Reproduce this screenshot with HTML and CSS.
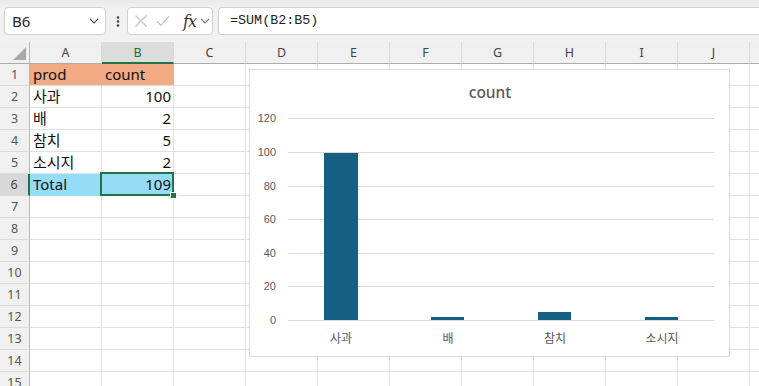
FILE: index.html
```html
<!DOCTYPE html>
<html lang="ko">
<head>
<meta charset="utf-8">
<title>Sheet</title>
<link rel="stylesheet" href="styles.css">
</head>
<body>
<div class="page">
  <div class="toolbar">
    <div class="namebox">
      <span class="nb-text">B6</span>
      <svg class="chev" width="10" height="6" viewBox="0 0 10 6"><path d="M1 1 L5 5 L9 1" fill="none" stroke="#555" stroke-width="1.2"/></svg>
    </div>
    <svg class="dots" width="4" height="11" viewBox="0 0 4 11"><circle cx="2" cy="1.5" r="1.3" fill="#444"/><circle cx="2" cy="5.5" r="1.3" fill="#444"/><circle cx="2" cy="9.5" r="1.3" fill="#444"/></svg>
    <div class="fxbox">
      <svg width="14" height="14" viewBox="0 0 14 14"><path d="M1.5 1.5 L12.5 12.5 M12.5 1.5 L1.5 12.5" stroke="#c3c3c3" stroke-width="1.2" fill="none"/></svg>
      <svg width="14" height="12" viewBox="0 0 14 12"><path d="M1 6.5 L5 10.5 L13 1.5" stroke="#c3c3c3" stroke-width="1.2" fill="none"/></svg>
      <span class="fx">fx</span>
      <svg class="chev2" width="10" height="6" viewBox="0 0 10 6"><path d="M1 1 L5 5 L9 1" fill="none" stroke="#777" stroke-width="1.1"/></svg>
    </div>
    <div class="formula">=SUM(B2:B5)</div>
  </div>

  <div class="sheet">
    <div class="row hdr">
      <div class="corner"><span class="tri"></span></div>
      <div class="ch">A</div><div class="ch sel">B</div><div class="ch">C</div><div class="ch">D</div><div class="ch">E</div><div class="ch">F</div><div class="ch">G</div><div class="ch">H</div><div class="ch">I</div><div class="ch">J</div><div class="ch"></div>
    </div>
    <div class="row">
      <div class="rh">1</div>
      <div class="c orange">prod</div><div class="c orange">count</div><div class="c"></div><div class="c"></div><div class="c"></div><div class="c"></div><div class="c"></div><div class="c"></div><div class="c"></div><div class="c"></div><div class="c"></div>
    </div>
    <div class="row">
      <div class="rh">2</div>
      <div class="c">사과</div><div class="c num">100</div><div class="c"></div><div class="c"></div><div class="c"></div><div class="c"></div><div class="c"></div><div class="c"></div><div class="c"></div><div class="c"></div><div class="c"></div>
    </div>
    <div class="row">
      <div class="rh">3</div>
      <div class="c">배</div><div class="c num">2</div><div class="c"></div><div class="c"></div><div class="c"></div><div class="c"></div><div class="c"></div><div class="c"></div><div class="c"></div><div class="c"></div><div class="c"></div>
    </div>
    <div class="row">
      <div class="rh">4</div>
      <div class="c">참치</div><div class="c num">5</div><div class="c"></div><div class="c"></div><div class="c"></div><div class="c"></div><div class="c"></div><div class="c"></div><div class="c"></div><div class="c"></div><div class="c"></div>
    </div>
    <div class="row">
      <div class="rh">5</div>
      <div class="c">소시지</div><div class="c num">2</div><div class="c"></div><div class="c"></div><div class="c"></div><div class="c"></div><div class="c"></div><div class="c"></div><div class="c"></div><div class="c"></div><div class="c"></div>
    </div>
    <div class="row">
      <div class="rh rsel">6</div>
      <div class="c blue">Total</div><div class="c blue num">109</div><div class="c"></div><div class="c"></div><div class="c"></div><div class="c"></div><div class="c"></div><div class="c"></div><div class="c"></div><div class="c"></div><div class="c"></div>
    </div>
    <div class="row"><div class="rh">7</div><div class="c"></div><div class="c"></div><div class="c"></div><div class="c"></div><div class="c"></div><div class="c"></div><div class="c"></div><div class="c"></div><div class="c"></div><div class="c"></div><div class="c"></div></div>
    <div class="row"><div class="rh">8</div><div class="c"></div><div class="c"></div><div class="c"></div><div class="c"></div><div class="c"></div><div class="c"></div><div class="c"></div><div class="c"></div><div class="c"></div><div class="c"></div><div class="c"></div></div>
    <div class="row"><div class="rh">9</div><div class="c"></div><div class="c"></div><div class="c"></div><div class="c"></div><div class="c"></div><div class="c"></div><div class="c"></div><div class="c"></div><div class="c"></div><div class="c"></div><div class="c"></div></div>
    <div class="row"><div class="rh">10</div><div class="c"></div><div class="c"></div><div class="c"></div><div class="c"></div><div class="c"></div><div class="c"></div><div class="c"></div><div class="c"></div><div class="c"></div><div class="c"></div><div class="c"></div></div>
    <div class="row"><div class="rh">11</div><div class="c"></div><div class="c"></div><div class="c"></div><div class="c"></div><div class="c"></div><div class="c"></div><div class="c"></div><div class="c"></div><div class="c"></div><div class="c"></div><div class="c"></div></div>
    <div class="row"><div class="rh">12</div><div class="c"></div><div class="c"></div><div class="c"></div><div class="c"></div><div class="c"></div><div class="c"></div><div class="c"></div><div class="c"></div><div class="c"></div><div class="c"></div><div class="c"></div></div>
    <div class="row"><div class="rh">13</div><div class="c"></div><div class="c"></div><div class="c"></div><div class="c"></div><div class="c"></div><div class="c"></div><div class="c"></div><div class="c"></div><div class="c"></div><div class="c"></div><div class="c"></div></div>
    <div class="row"><div class="rh">14</div><div class="c"></div><div class="c"></div><div class="c"></div><div class="c"></div><div class="c"></div><div class="c"></div><div class="c"></div><div class="c"></div><div class="c"></div><div class="c"></div><div class="c"></div></div>
    <div class="row"><div class="rh">15</div><div class="c"></div><div class="c"></div><div class="c"></div><div class="c"></div><div class="c"></div><div class="c"></div><div class="c"></div><div class="c"></div><div class="c"></div><div class="c"></div><div class="c"></div></div>

    <div class="selection"></div>
    <div class="handle"></div>

    <div class="chart">
      <svg width="479" height="286" viewBox="0 0 479 286">
        <text class="title" x="240" y="28" text-anchor="middle">count</text>
        <g stroke="#d9d9d9" stroke-width="1">
          <line x1="38" y1="48.5" x2="464" y2="48.5"/>
          <line x1="38" y1="82.5" x2="464" y2="82.5"/>
          <line x1="38" y1="116.5" x2="464" y2="116.5"/>
          <line x1="38" y1="149.5" x2="464" y2="149.5"/>
          <line x1="38" y1="183.5" x2="464" y2="183.5"/>
          <line x1="38" y1="216.5" x2="464" y2="216.5"/>
          <line x1="38" y1="250.5" x2="464" y2="250.5"/>
        </g>
        <g class="ylab" text-anchor="end">
          <text x="26" y="52">120</text>
          <text x="26" y="86">100</text>
          <text x="26" y="120">80</text>
          <text x="26" y="153">60</text>
          <text x="26" y="187">40</text>
          <text x="26" y="220">20</text>
          <text x="26" y="254">0</text>
        </g>
        <g fill="#156082">
          <rect x="74" y="83" width="34" height="167"/>
          <rect x="181" y="247" width="33" height="3"/>
          <rect x="288" y="242" width="33" height="8"/>
          <rect x="395" y="247" width="33" height="3"/>
        </g>
        <g class="xlab" text-anchor="middle">
          <text x="91" y="273">사과</text>
          <text x="198" y="273">배</text>
          <text x="305" y="273">참치</text>
          <text x="412" y="273">소시지</text>
        </g>
      </svg>
    </div>
  </div>
</div>
</body>
</html>
```

FILE: styles.css
```css
* { box-sizing: border-box; }
html, body { margin: 0; padding: 0; }
body {
  width: 759px;
  height: 386px;
  overflow: hidden;
  background: #ffffff;
  font-family: "Noto Sans", "Noto Sans CJK KR", sans-serif;
}
.page { position: relative; width: 759px; height: 386px; overflow: hidden; }

/* toolbar */
.toolbar {
  height: 42px;
  background: linear-gradient(#e9e9e9 0px, #f1f1f1 7px, #f1f1f1 100%);
  display: flex;
  align-items: flex-start;
  padding: 7px 0 0 4px;
}
.namebox {
  width: 102px;
  height: 28px;
  background: #fff;
  border: 1px solid #d0d0d0;
  border-radius: 4px;
  display: flex;
  align-items: center;
  padding: 0 6px 0 7px;
  justify-content: space-between;
}
.nb-text { font-size: 15px; color: #242424; }
.dots { margin: 9px 0 0 10px; }
.fxbox {
  margin-left: 7px;
  width: 86px;
  height: 28px;
  background: #fff;
  border: 1px solid #d0d0d0;
  border-radius: 4px;
  display: flex;
  align-items: center;
  padding: 0 0 0 6px;
  gap: 8px;
}
.fx {
  font-family: "DejaVu Serif", "Liberation Serif", serif;
  font-style: italic;
  font-size: 16px;
  color: #333;
  margin-left: 5px;
  letter-spacing: -1px;
}
.chev2 { margin-left: -4px; }
.formula {
  margin-left: 5px;
  flex: 1;
  height: 28px;
  background: #fff;
  border: 1px solid #d0d0d0;
  border-right: none;
  border-radius: 4px 0 0 4px;
  padding: 4px 0 0 11px;
  font-family: "Liberation Mono", monospace;
  font-size: 13.4px;
  color: #222;
  line-height: 18px;
}

/* sheet */
.sheet { position: relative; }
.row { display: flex; height: 22px; }
.row > div { flex: none; }
.hdr { height: 22px; background: #f0f0f0; }
.corner {
  width: 30px;
  height: 22px;
  border-right: 1px solid #b8b8b8;
  border-bottom: 1px solid #ababab;
  position: relative;
}
.tri {
  position: absolute;
  right: 3px;
  bottom: 3px;
  width: 0; height: 0;
  border-left: 13px solid transparent;
  border-bottom: 13px solid #a9a9a9;
}
.ch {
  width: 72px;
  height: 22px;
  border-right: 1px solid #d9d9d9;
  border-bottom: 1px solid #ababab;
  text-align: center;
  font-size: 12.5px;
  color: #444;
  line-height: 21px;
}
.ch.sel {
  background: #dcdcdc;
  color: #1e7145;
  border-bottom: 2px solid #217346;
}
.rh {
  width: 30px;
  height: 22px;
  background: #f0f0f0;
  border-right: 1px solid #b8b8b8;
  border-bottom: 1px solid #dadada;
  text-align: center;
  font-size: 12.5px;
  color: #555;
  line-height: 22px;
}
.rh.rsel {
  background: #d8d8d8;
  border-right: 2px solid #217346;
  color: #444;
}
.c {
  width: 72px;
  height: 22px;
  border-right: 1px solid #e1e1e1;
  border-bottom: 1px solid #e1e1e1;
  font-size: 15px;
  color: #111;
  line-height: 21px;
  padding: 0 2px 0 3px;
  white-space: nowrap;
  overflow: hidden;
}
.c.num { text-align: right; }
.c.orange { background: #f2aa84; border-right-color: #f2aa84; }
.c.blue { background: #97dcf6; border-right-color: #97dcf6; border-bottom-color: #97dcf6; }

.selection {
  position: absolute;
  left: 100px;
  top: 130px;
  width: 74px;
  height: 24px;
  border: 2px solid #217346;
}
.handle {
  position: absolute;
  left: 170px;
  top: 150px;
  width: 7px;
  height: 7px;
  background: #217346;
  border: 1px solid #fff;
}

/* chart */
.chart {
  position: absolute;
  left: 249px;
  top: 27px;
  width: 481px;
  height: 288px;
  background: #fff;
  border: 1px solid #d9d9d9;
}
.chart svg { display: block; }
.title {
  font-family: "Noto Sans", sans-serif;
  font-size: 15.5px;
  font-weight: 500;
  fill: #595959;
}
.ylab text {
  font-family: "Liberation Sans", sans-serif;
  font-size: 11px;
  fill: #595959;
}
.xlab text {
  font-family: "Noto Sans CJK KR", sans-serif;
  font-size: 12px;
  fill: #595959;
}
```
